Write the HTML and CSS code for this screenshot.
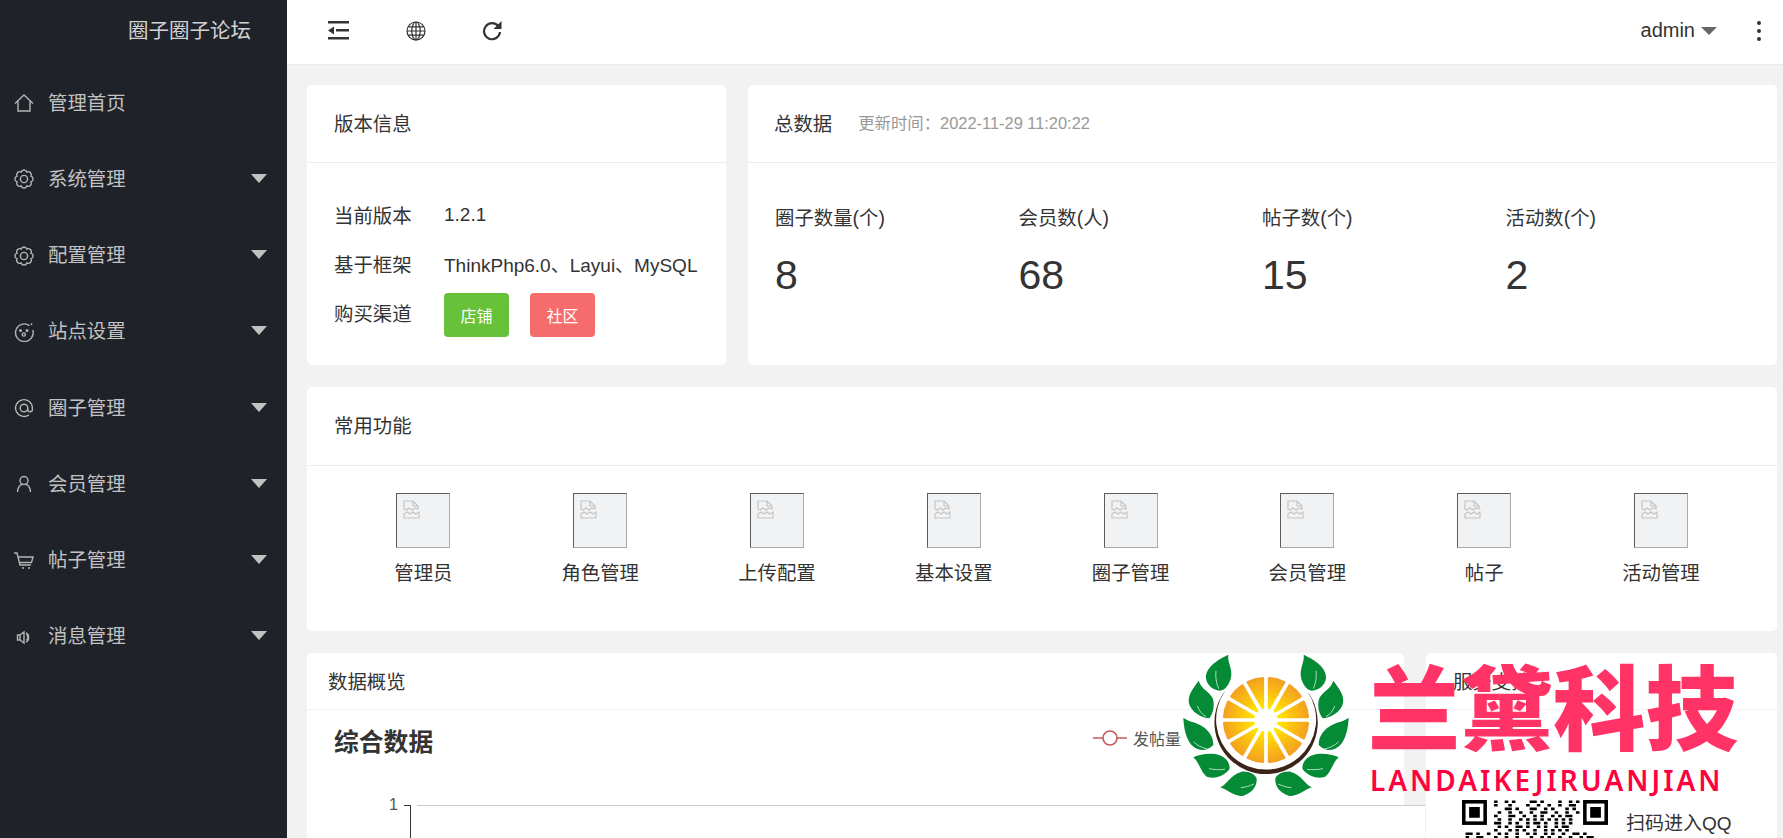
FILE: index.html
```html
<!DOCTYPE html>
<html lang="en">
<head>
    <meta charset="UTF-8">
    <meta name="viewport" content="width=device-width, initial-scale=1.0">
    <title>圈子圈子论坛</title>
    <link rel="stylesheet" href="styles.css">
</head>
<body>
    <svg class="defs" width="0" height="0">
        <symbol id="gear" viewBox="0 0 20 20">
            <path d="M16.93 12.87A3 3 0 0 1 12.87 16.93A3 3 0 0 1 7.13 16.93A3 3 0 0 1 3.07 12.87A3 3 0 0 1 3.07 7.13A3 3 0 0 1 7.13 3.07A3 3 0 0 1 12.87 3.07A3 3 0 0 1 16.93 7.13A3 3 0 0 1 16.93 12.87Z"/>
            <circle cx="10" cy="10" r="3.6"/>
        </symbol>
        <symbol id="broken" viewBox="0 0 17 19">
            <path d="M1 9V1h9l5 5v3l-3-1-3 2-3-2-3 2-2-1zM10 1v5h5M1 14l3-2 3 2 3-2 3 2 3-2v6H1z"/>
        </symbol>
    </svg>

    <aside class="sidebar">
        <div class="logo">圈子圈子论坛</div>
        <ul class="menu">
            <li class="menu-item">
                <svg class="menu-icon" viewBox="0 0 20 20"><path d="M1 10.500 10 2l9 8.500M4 8.500V18h12V8.500"/></svg>
                <span class="menu-text">管理首页</span>
            </li>
            <li class="menu-item">
                <svg class="menu-icon"><use href="#gear"/></svg>
                <span class="menu-text">系统管理</span><i class="caret"></i>
            </li>
            <li class="menu-item">
                <svg class="menu-icon"><use href="#gear"/></svg>
                <span class="menu-text">配置管理</span><i class="caret"></i>
            </li>
            <li class="menu-item">
                <svg class="menu-icon" viewBox="0 0 20 20"><path d="M15.500 3.600A8.800 8.800 0 1 0 18.700 8"/><path d="M17 1.500l1 1.500"/><circle cx="6.500" cy="8.500" r=".8"/><circle cx="13" cy="8.500" r=".8"/><circle cx="9.800" cy="12.500" r="1.600"/></svg>
                <span class="menu-text">站点设置</span><i class="caret"></i>
            </li>
            <li class="menu-item">
                <svg class="menu-icon" viewBox="0 0 20 20"><path d="M13.800 10a3.800 3.800 0 1 1-7.600 0 3.800 3.800 0 0 1 7.600 0v1.400a2.300 2.300 0 0 0 4.600 0V10a8.400 8.400 0 1 0-3.300 6.700"/></svg>
                <span class="menu-text">圈子管理</span><i class="caret"></i>
            </li>
            <li class="menu-item">
                <svg class="menu-icon" viewBox="0 0 20 20"><circle cx="10" cy="6.500" r="4"/><path d="M3.500 18c0-4.500 2.500-7.500 5-7.700M16.500 18c0-4.500-2.500-7.500-5-7.700"/></svg>
                <span class="menu-text">会员管理</span><i class="caret"></i>
            </li>
            <li class="menu-item">
                <svg class="menu-icon" viewBox="0 0 20 20"><path d="M0 2h3l3 12h11M4.200 6H19l-1.500 5.500H6M8 17h2M14 17h2"/></svg>
                <span class="menu-text">帖子管理</span><i class="caret"></i>
            </li>
            <li class="menu-item">
                <svg class="menu-icon" viewBox="0 0 20 20"><path d="M3.500 8H6v5H3.500zM6 8l4-3v11l-4-3M12.500 8a3 3 0 0 1 0 5M12 6a4.500 4.500 0 0 1 2.500 4.500A4.500 4.500 0 0 1 12 15"/></svg>
                <span class="menu-text">消息管理</span><i class="caret"></i>
            </li>
        </ul>
    </aside>

    <div class="main">
        <header class="topbar">
            <div class="tools">
                <svg class="tool" viewBox="0 0 21 19"><path d="M0 0h21v2.500H0zM8 8h13v2.500H8zM0 16h21v2.500H0zM6 5.500v8L0 9.500z"/></svg>
                <svg class="tool globe" viewBox="0 0 20 20"><circle cx="10" cy="10" r="9"/><ellipse cx="10" cy="10" rx="4.200" ry="9"/><path d="M10 1v18M1 10h18M2.200 5.800h15.600M2.200 14.200h15.600"/></svg>
                <svg class="tool refresh" viewBox="0 0 20 20"><path d="M16.500 5.500A8 8 0 1 0 18 11"/><path class="arrow" d="M19.500 0v8h-8z"/></svg>
            </div>
            <div class="account">
                <span>admin</span><i class="caret caret-dark"></i>
                <div class="more"><b></b><b></b><b></b></div>
            </div>
        </header>

        <main class="content">
            <div class="row">
                <section class="card card-version">
                    <div class="card-head">版本信息</div>
                    <div class="version-body">
                        <div class="version-row"><label>当前版本</label><span>1.2.1</span></div>
                        <div class="version-row"><label>基于框架</label><span>ThinkPhp6.0、Layui、MySQL</span></div>
                        <div class="version-row">
                            <label>购买渠道</label>
                            <a class="btn btn-green">店铺</a>
                            <a class="btn btn-red">社区</a>
                        </div>
                    </div>
                </section>
                <section class="card card-total">
                    <div class="card-head">总数据<small>更新时间：2022-11-29 11:20:22</small></div>
                    <div class="stats">
                        <div><p>圈子数量(个)</p><strong>8</strong></div>
                        <div><p>会员数(人)</p><strong>68</strong></div>
                        <div><p>帖子数(个)</p><strong>15</strong></div>
                        <div><p>活动数(个)</p><strong>2</strong></div>
                    </div>
                </section>
            </div>

            <section class="card card-common">
                <div class="card-head">常用功能</div>
                <div class="shortcuts">
                    <div class="shortcut"><div class="thumb"><svg class="thumb-icon"><use href="#broken"/></svg></div><span>管理员</span></div>
                    <div class="shortcut"><div class="thumb"><svg class="thumb-icon"><use href="#broken"/></svg></div><span>角色管理</span></div>
                    <div class="shortcut"><div class="thumb"><svg class="thumb-icon"><use href="#broken"/></svg></div><span>上传配置</span></div>
                    <div class="shortcut"><div class="thumb"><svg class="thumb-icon"><use href="#broken"/></svg></div><span>基本设置</span></div>
                    <div class="shortcut"><div class="thumb"><svg class="thumb-icon"><use href="#broken"/></svg></div><span>圈子管理</span></div>
                    <div class="shortcut"><div class="thumb"><svg class="thumb-icon"><use href="#broken"/></svg></div><span>会员管理</span></div>
                    <div class="shortcut"><div class="thumb"><svg class="thumb-icon"><use href="#broken"/></svg></div><span>帖子</span></div>
                    <div class="shortcut"><div class="thumb"><svg class="thumb-icon"><use href="#broken"/></svg></div><span>活动管理</span></div>
                </div>
            </section>

            <div class="row">
                <section class="card card-chart">
                    <div class="card-head card-head-low">数据概览</div>
                    <div class="chart-title">
                        <h3>综合数据</h3>
                        <div class="legend">
                            <svg width="34" height="16" viewBox="0 0 34 16"><path d="M0 8h10M24 8h10"/><circle cx="17" cy="8" r="7"/></svg>
                            <span>发帖量</span>
                        </div>
                    </div>
                    <svg class="chart" width="1097" height="70">
                        <text x="91" y="38">1</text>
                        <path class="grid" d="M110 33.500H1097"/>
                        <path class="axis" d="M97 33.500h7M103.500 33.500V70"/>
                    </svg>
                </section>
                <section class="card card-service">
                    <div class="card-head card-head-low">服务支持</div>
                    <div class="service-body">
                        <svg class="qr" viewBox="0 0 41 41" width="146" height="146">
                            <g class="finder">
                                <rect x=".5" y=".5" width="6" height="6"/>
                                <rect x="34.500" y=".5" width="6" height="6"/>
                            </g>
                            <path d="M2 2h3v3H2zM36 2h3v3h-3z"/>
                            <path class="dots" d="M9 .5h1m2 0h1m1 0h1m4 0h2m1 0h1m4 0h1m2 0h1m1 0h1M9 1.500h1m3 0h1m4 0h1m2 0h1m2 0h1m2 0h1m2 0h2M12 2.500h2m1 0h1m3 0h2m2 0h1m1 0h1m3 0h1m1 0h1M10 3.500h1m2 0h1m2 0h1m2 0h1m2 0h2m2 0h1m2 0h1m2 0h1M9 4.500h1m3 0h2m2 0h1m2 0h1m1 0h1m2 0h1m1 0h1m1 0h2M10 5.500h1m2 0h1m2 0h1m1 0h1m1 0h1m1 0h1m1 0h1m1 0h1m1 0h1m1 0h1M9 6.500h2m2 0h1m1 0h1m2 0h1m1 0h2m1 0h1m2 0h1m1 0h1m1 0h1M10 7.500h1m1 0h1m2 0h2m1 0h1m2 0h1m1 0h1m2 0h1m1 0h2M9 8.500h1m3 0h1m1 0h1m1 0h1m2 0h1m2 0h1m1 0h1m1 0h1m1 0h1M1 9.500h2m1 0h1m2 0h1m2 0h1m1 0h1m2 0h1m2 0h1m1 0h1m2 0h1m1 0h1m2 0h1m2 0h2m1 0h1M1 10.500h1m2 0h2m3 0h1m2 0h1m2 0h1m3 0h1m2 0h1m1 0h1m2 0h1m2 0h1m2 0h1m1 0h2"/>
                        </svg>
                        <span class="qr-text">扫码进入QQ</span>
                    </div>
                </section>
            </div>
        </main>
    </div>

    <!-- watermark stamped over the page -->
    <div class="wm-patch"></div>
    <svg class="wm-logo" viewBox="0 0 600 480" width="200" height="160">
        <defs>
            <radialGradient id="fruit" gradientUnits="userSpaceOnUse" cx="0" cy="0" r="128">
                <stop offset=".3" stop-color="#ffe600"/>
                <stop offset=".6" stop-color="#fcc410"/>
                <stop offset="1" stop-color="#f3a020"/>
            </radialGradient>
            <g id="leaves">
                <path d="M175 14C140 30 105 55 108 85c2 20 22 37 42 37 15 0 32-22 34-47 1-25-12-40-9-61Z"/>
                <path d="M86 92C70 115 52 135 57 160c5 25 38 45 61 45 12-15 17-40 10-60-8-20-33-25-42-53Z"/>
                <path d="M40 203c2 37 10 82 45 95 15 4 30 2 45-13 0-30-20-50-40-60-18-10-35-10-50-22Z"/>
                <path d="M70 322c30-14 80-17 100 8 8 10 10 20 8 28-13 17-38 30-63 24-20-7-25-42-45-60Z"/>
                <path d="M150 412c20-7 30-37 65-47 20-3 40 7 45 20 2 25-15 45-40 52-25 5-45-17-70-25Z"/>
            </g>
            <g id="veins">
                <path d="M146 116c-8-18-10-36-8-54"/>
                <path d="M108 200C95 192 87 182 82 168"/>
                <path d="M112 297c-16-4-30-10-42-22"/>
                <path d="M165 358c-16 2-32 1-48-2"/>
                <path d="M252 402c-14 6-26 10-40 11"/>
            </g>
            <path id="wedge" d="M10-37.300V-124.600A125 125 0 0 1 53.600-112.900Z"/>
        </defs>
        <g class="leaf"><use href="#leaves"/><use href="#leaves" transform="translate(576 0) scale(-1 1)"/></g>
        <g class="vein"><use href="#veins"/><use href="#veins" transform="translate(576 0) scale(-1 1)"/></g>
        <path class="rind" d="M166 122A155 155 0 1 0 412 124A150 150 0 1 1 166 122Z"/>
        <g class="wedges" transform="translate(288 210)">
            <use href="#wedge"/>
            <use href="#wedge" transform="rotate(30)"/>
            <use href="#wedge" transform="rotate(60)"/>
            <use href="#wedge" transform="rotate(90)"/>
            <use href="#wedge" transform="rotate(120)"/>
            <use href="#wedge" transform="rotate(150)"/>
            <use href="#wedge" transform="rotate(180)"/>
            <use href="#wedge" transform="rotate(210)"/>
            <use href="#wedge" transform="rotate(240)"/>
            <use href="#wedge" transform="rotate(270)"/>
            <use href="#wedge" transform="rotate(300)"/>
            <use href="#wedge" transform="rotate(330)"/>
        </g>
    </svg>
    <div class="wm-title">兰黛科技</div>
    <div class="wm-sub">LANDAIKEJIRUANJIAN</div>
</body>
</html>
```

FILE: styles.css
```css
* {
    box-sizing: border-box;
}
html, body {
    height: 838px;
}
body {
    margin: 0;
    display: flex;
    overflow: hidden;
    position: relative;
    background-color: #f2f2f2;
    color: #333;
    font-family: "Liberation Sans", "Noto Sans CJK SC", sans-serif;
    font-size: 19.4px;
}
.defs {
    position: absolute;
}

/* sidebar */
.sidebar {
    flex: 0 0 287px;
    background-color: #20222a;
    color: #c2c2c2;
}
.logo {
    height: 64px;
    padding: 0 36px 6px 0;
    display: flex;
    align-items: center;
    justify-content: flex-end;
    font-size: 20.5px;
    color: #d2d2d2;
}
.menu {
    list-style: none;
    margin: 0;
    padding: 0;
}
.menu-item {
    height: 76.25px;
    display: flex;
    align-items: center;
    padding: 0 20px 0 14px;
}
.menu-icon {
    width: 20px;
    height: 20px;
    margin: 2px 14px 0 0;
    fill: none;
    stroke: #b4b4b4;
    stroke-width: 1.4;
}
.menu-text {
    flex: 1;
    padding-bottom: 2px;
}
.caret {
    width: 0;
    height: 0;
    border-style: solid;
    border-width: 9px 8px 0;
    border-color: #c2c2c2 transparent transparent;
}

/* top bar */
.main {
    flex: 1;
    min-width: 0;
}
.topbar {
    height: 65px;
    background-color: #fff;
    border-bottom: 1px solid #ebebeb;
    display: flex;
    align-items: center;
    justify-content: space-between;
    padding: 0 22px 3px 41px;
}
.tools {
    display: flex;
    align-items: center;
    gap: 56.500px;
}
.tool {
    width: 21px;
    height: 19px;
    fill: #333;
}
.globe {
    width: 20px;
    height: 20px;
    fill: none;
    stroke: #333;
    stroke-width: 1.2;
}
.refresh {
    width: 20px;
    height: 20px;
    fill: none;
    stroke: #333;
    stroke-width: 2.2;
}
.refresh .arrow {
    fill: #333;
    stroke: none;
}
.account {
    display: flex;
    align-items: center;
    font-size: 20px;
}
.caret-dark {
    margin-left: 6px;
    border-width: 8px 8px 0;
    border-color: #666 transparent transparent;
}
.more {
    margin-left: 40px;
    display: flex;
    flex-direction: column;
    gap: 4px;
}
.more b {
    width: 4px;
    height: 4px;
    border-radius: 50%;
    background-color: #333;
}

/* cards */
.content {
    padding: 20px 6px 0 20px;
    display: flex;
    flex-direction: column;
    gap: 22px;
}
.row {
    display: flex;
    gap: 22px;
}
.card {
    background-color: #fff;
    border-radius: 5px;
}
.card-head {
    height: 78px;
    padding: 0 27px 3px;
    display: flex;
    align-items: center;
    border-bottom: 1px solid #ececec;
}
.card-head small {
    margin-left: 26px;
    font-size: 16.400px;
    color: #999;
}
.card-head-low {
    height: 57px;
    padding-bottom: 2px;
    border-bottom-color: #f2f2f2;
}
.card-version {
    flex: 0 0 419px;
    height: 280px;
}
.card-total {
    flex: 1;
}
.card-total .card-head {
    padding-left: 26px;
}
.version-body {
    padding: 27px 0 0 27px;
}
.version-row {
    height: 49px;
    display: flex;
    align-items: center;
}
.version-row label {
    width: 110px;
}
.version-row span {
    font-size: 19px;
}
.btn {
    width: 65px;
    height: 44px;
    margin: 4px 21px 0 0;
    border-radius: 4px;
    display: flex;
    align-items: center;
    justify-content: center;
    font-size: 16px;
    color: #fff;
}
.btn-green {
    background-color: #67c23a;
}
.btn-red {
    background-color: #f56c6c;
}
.stats {
    padding: 41px 0 0 27px;
    display: grid;
    grid-template-columns: repeat(4, 243.500px);
}
.stats p {
    margin: 0 0 18px;
    line-height: 28px;
}
.stats strong {
    display: block;
    font-size: 41px;
    font-weight: normal;
    line-height: 50px;
}

/* shortcuts */
.card-common {
    height: 244px;
}
.card-common .card-head {
    height: 79px;
}
.shortcuts {
    padding: 27px 0 0 28px;
    display: grid;
    grid-template-columns: repeat(8, 176.800px);
}
.shortcut {
    display: flex;
    flex-direction: column;
    align-items: center;
    gap: 11px;
    line-height: 28px;
}
.thumb {
    width: 54px;
    height: 55px;
    padding: 6px;
    background-color: #f1f2f4;
    border: 1px solid;
    border-color: #5c5c5c #aaa #aaa #5c5c5c;
}
.thumb-icon {
    display: block;
    width: 17px;
    height: 19px;
    fill: none;
    stroke: #c4c4c4;
    stroke-width: 1.2;
}

/* chart */
.card-chart {
    flex: 0 0 1097px;
}
.card-chart .card-head {
    padding-left: 21px;
}
.chart-title {
    height: 62px;
    padding: 0 223px 0 27px;
    display: flex;
    align-items: center;
    justify-content: space-between;
}
.chart-title h3 {
    margin: 0;
    font-size: 24.800px;
    font-weight: bold;
    position: relative;
    top: -1px;
}
.legend {
    display: flex;
    align-items: center;
    gap: 6px;
    font-size: 16px;
    color: #555;
    position: relative;
    top: -3px;
}
.legend svg {
    fill: #fff;
    stroke: #c6585a;
    stroke-width: 1.6;
}
.chart {
    display: block;
}
.chart text {
    font-size: 16px;
    fill: #555;
    text-anchor: end;
}
.chart path {
    fill: none;
}
.chart .grid {
    stroke: #ccc;
}
.chart .axis {
    stroke: #333;
}

/* service */
.card-service {
    flex: 1;
}
.service-body {
    padding: 90px 0 0 36px;
    display: flex;
    align-items: flex-start;
}
.qr {
    flex: none;
}
.qr .finder {
    fill: none;
    stroke: #000;
}
.qr .dots {
    fill: none;
    stroke: #000;
    stroke-width: .72;
}
.qr-text {
    margin: 10px 0 0 18px;
    line-height: 28px;
    font-size: 19px;
    white-space: nowrap;
}

/* watermark */
.wm-patch {
    position: absolute;
    left: 1404px;
    top: 805px;
    width: 21px;
    height: 33px;
    background-color: #fff;
    border-top: 1px solid #ccc;
}
.wm-logo {
    position: absolute;
    left: 1170px;
    top: 650px;
}
.leaf {
    fill: #058a36;
}
.vein {
    fill: none;
    stroke: #fff;
    stroke-width: 2;
}
.rind {
    fill: #3a2418;
}
.wedges {
    fill: url(#fruit);
    stroke: url(#fruit);
    stroke-width: 9;
    stroke-linejoin: round;
}
.wm-title {
    position: absolute;
    left: 1368px;
    top: 638px;
    font-family: "Noto Sans CJK SC", sans-serif;
    font-size: 92.500px;
    font-weight: 900;
    line-height: 130px;
    white-space: nowrap;
    color: #ff3366;
}
.wm-sub {
    position: absolute;
    left: 1370px;
    top: 762px;
    font-family: "Noto Sans", sans-serif;
    font-size: 28px;
    font-weight: 600;
    line-height: 36px;
    letter-spacing: 3px;
    white-space: nowrap;
    color: #ff0040;
}
```
